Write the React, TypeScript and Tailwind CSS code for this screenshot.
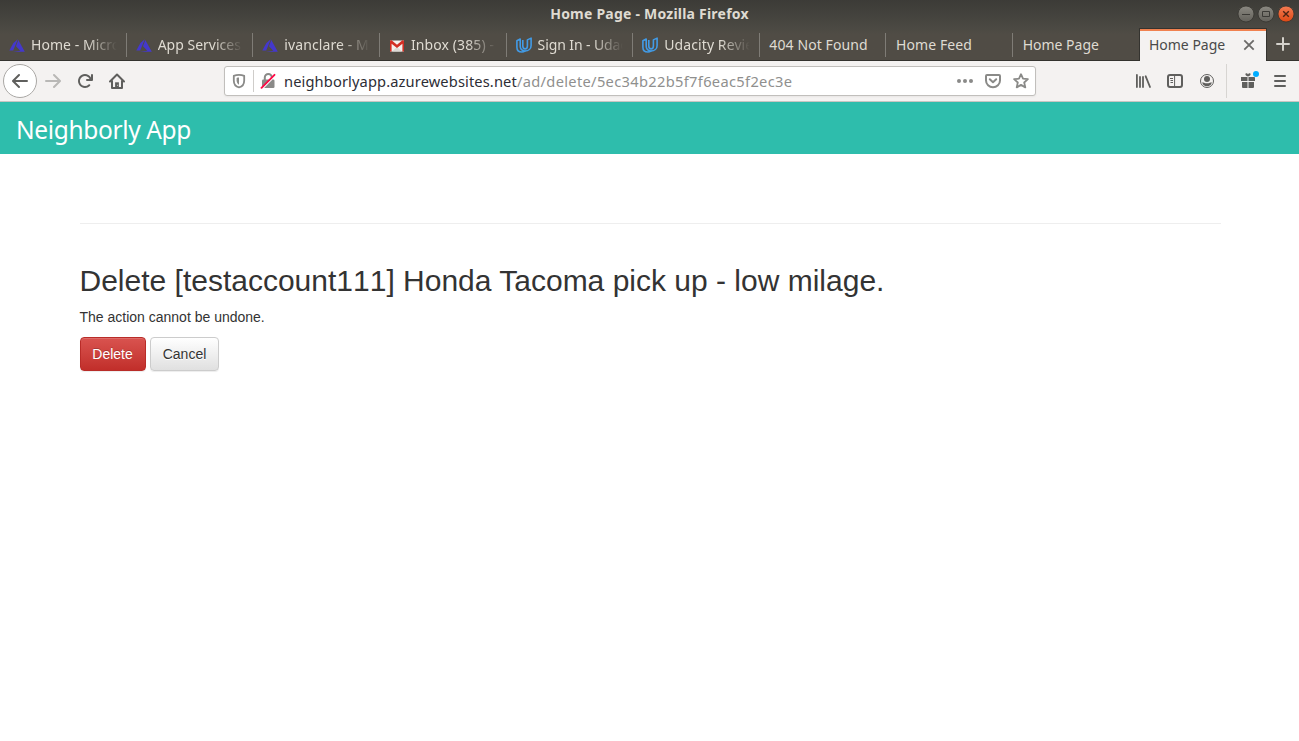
import React from "react";

const tabs: { label: string; icon?: "azure" | "gmail" | "udacity"; cls: string }[] = [
  { label: "Home - Micro", icon: "azure", cls: "tracking-[0.05px]" },
  { label: "App Services", icon: "azure", cls: "tracking-[0px]" },
  { label: "ivanclare - M", icon: "azure", cls: "tracking-[0.1px]" },
  { label: "Inbox (385) -", icon: "gmail", cls: "tracking-[0.1px]" },
  { label: "Sign In - Udac", icon: "udacity", cls: "tracking-[-0.1px]" },
  { label: "Udacity Revie", icon: "udacity", cls: "tracking-[0.1px]" },
  { label: "404 Not Found", cls: "tracking-[0.1px]" },
  { label: "Home Feed", cls: "tracking-[0.1px]" },
  { label: "Home Page", cls: "tracking-[0px]" },
];

function Favicon({ kind }: { kind: "azure" | "gmail" | "udacity" }) {
  if (kind === "azure")
    return (
      <svg className="mt-0.5 size-4 shrink-0" viewBox="0 0 16 16" fill="#4438cc">
        <path d="M8.800 1.300 4.400 4.900.3 12.400h3.900zM9.300 2.100 7 8.200l4.300 4.500-7.500 1h12z" />
      </svg>
    );
  if (kind === "gmail")
    return (
      <svg className="mt-0.5 size-4 shrink-0" viewBox="0 0 16 16">
        <path d="M1.200 2.500h13.600v11H1.200z" fill="#f4f1ee" />
        <path d="m3 13.500 5-4.500 5 4.500z" fill="#dcd9d5" />
        <path d="M1 13.500V3.800C1 2.200 2.400 2.100 3.200 2.700L8 6.800l4.800-4.100c.8-.6 2.200-.5 2.200 1.100v9.700h-1.600V5.700L8 10 2.600 5.700v7.800z" fill="#d32f24" />
      </svg>
    );
  return (
    <svg className="size-4 shrink-0" viewBox="0 0 16 16" fill="none" stroke="#429be6" strokeWidth="1.600" strokeLinejoin="round">
      <path d="M4.200 2 .9 3.700v6.500c0 3 2.200 4.800 5 4.800 1.200 0 2.200-.4 3-1-3-.3-4.700-2-4.700-5z" />
      <path d="M6.800 3v6c0 1.800 1 2.900 2.300 2.900s2.300-1.100 2.300-2.900V2.900l3.700-1.800v7.300c0 3.400-2.600 5.600-6.200 5.600" />
    </svg>
  );
}

function TitleBar() {
  return (
    <div className="relative flex h-7 items-center justify-center bg-linear-to-b from-[#3c3b37] to-[#4b4943] text-[14px] font-bold text-[#dfdbd2]">
      <span className="-mt-0.5 tracking-[0.22px]">Home Page - Mozilla Firefox</span>
      <div className="absolute right-[4px] top-[5px] flex gap-0.5">
        <svg className="size-[18px]" viewBox="0 0 18 18">
          <defs>
            <linearGradient id="grayButton" x1="0" y1="0" x2="0" y2="1">
              <stop offset="0" stopColor="#8b8982" />
              <stop offset="1" stopColor="#62605a" />
            </linearGradient>
            <linearGradient id="closeButton" x1="0" y1="0" x2="0" y2="1">
              <stop offset="0" stopColor="#f47c53" />
              <stop offset="1" stopColor="#dd4814" />
            </linearGradient>
          </defs>
          <circle cx="9" cy="9" r="8" fill="url(#grayButton)" stroke="#35342f" strokeWidth=".8" />
          <path d="M5 9.500h8" stroke="#3b3a36" />
        </svg>
        <svg className="size-[18px]" viewBox="0 0 18 18">
          <circle cx="9" cy="9" r="8" fill="url(#grayButton)" stroke="#35342f" strokeWidth=".8" />
          <path d="M5.500 6.500h7v5h-7z" fill="none" stroke="#3b3a36" />
        </svg>
        <svg className="size-[18px]" viewBox="0 0 18 18">
          <circle cx="9" cy="9" r="8" fill="url(#closeButton)" stroke="#35342f" strokeWidth=".8" />
          <path d="m6.200 6.200 5.600 5.600m0-5.600-5.600 5.600" stroke="#4b2414" strokeWidth="1.400" />
        </svg>
      </div>
    </div>
  );
}

function TabStrip() {
  return (
    <div className="flex h-[33px] border-b border-[#34332f] bg-linear-to-b from-[#4b4943] to-[#504c45] to-20% text-[14px] text-[#dfdbd2]">
      {tabs.map((t, i) => (
        <div key={i} className="flex h-8 w-[126.650px] shrink-0 items-center gap-1.5 pl-[9px] pt-px">
          {t.icon && <Favicon kind={t.icon} />}
          <span
            className={`${t.cls} min-w-0 flex-1 overflow-hidden whitespace-nowrap leading-5 ${
              t.icon ? "mask-r-from-65% mask-r-to-100%" : "pl-[0.5px]"
            }`}
          >
            {t.label}
          </span>
          <span className={`mb-[3px] h-6 w-px self-end bg-[#7f7c76] ${i === 8 ? "invisible" : ""} ${t.icon ? "ml-[3px]" : ""}`} />
        </div>
      ))}
      <div className="-ml-[0.850px] flex h-[33px] w-[128px] shrink-0 items-center border-x border-t border-[#34332f] bg-[#f4f2f1] pl-[9px] text-[#4a4a4a] shadow-[inset_0_2px_0_#f0814f]">
        <span className="-mt-px flex-1 whitespace-nowrap">Home Page</span>
        <svg className="mr-[9px] size-4" viewBox="0 0 16 16" stroke="#6b6a68" strokeWidth="1.800">
          <path d="m3.300 3.300 9.400 9.400m0-9.400-9.400 9.400" />
        </svg>
      </div>
      <div className="flex flex-1 items-center justify-center">
        <svg className="size-4" viewBox="0 0 16 16" stroke="#d5d2cc" strokeWidth="2" strokeLinecap="round">
          <path d="M8 2v12M2 8h12" />
        </svg>
      </div>
    </div>
  );
}

const ic = "size-4 shrink-0";

function NavBar() {
  return (
    <div className="flex h-[41px] items-center border-b border-[#c8c5c2] bg-[#f4f2f1] text-[#5f5f5d]">
      <div className="ml-[3px] flex size-[34px] items-center justify-center rounded-full border border-[#aaa8a5] bg-white">
        <svg className={ic} viewBox="0 0 16 16" fill="currentColor">
          <path d="M15 7H3.414l4.293-4.293a1 1 0 0 0-1.414-1.414l-6 6a1 1 0 0 0 0 1.414l6 6a1 1 0 0 0 1.414-1.414L3.414 9H15a1 1 0 0 0 0-2z" />
        </svg>
      </div>
      <svg className={`${ic} ml-2 rotate-180 text-[#b9b8b6]`} viewBox="0 0 16 16" fill="currentColor">
        <path d="M15 7H3.414l4.293-4.293a1 1 0 0 0-1.414-1.414l-6 6a1 1 0 0 0 0 1.414l6 6a1 1 0 0 0 1.414-1.414L3.414 9H15a1 1 0 0 0 0-2z" />
      </svg>
      <svg className={`${ic} ml-4`} viewBox="0 0 16 16" fill="currentColor">
        <path d="M15 1a1 1 0 0 0-1 1v2.418A6.995 6.995 0 1 0 8 15a6.954 6.954 0 0 0 4.950-2.050 1 1 0 0 0-1.414-1.414A5.019 5.019 0 1 1 12.549 6H10a1 1 0 0 0 0 2h5a1 1 0 0 0 1-1V2a1 1 0 0 0-1-1z" />
      </svg>
      <svg className={`${ic} ml-4`} viewBox="0 0 16 16" fill="none" stroke="currentColor" strokeWidth="2" strokeLinecap="round" strokeLinejoin="round">
        <path d="m1 8.500 7-7 7 7M3 7.500V15h10V7.500" />
        <path d="M8 14.500V9.300" strokeWidth="3.800" strokeLinecap="butt" />
        <path d="M8.700 12.300h.01" stroke="#f4f2f1" strokeWidth="1" />
      </svg>
      <div className="ml-[99px] flex h-[30px] w-[812px] items-center rounded-[3px] border border-[#c1bfbc] bg-white text-[#8a8a88] shadow-xs">
        <svg className={`${ic} ml-1.5`} viewBox="0 0 16 16" fill="none" stroke="currentColor" strokeWidth="1.800" strokeLinejoin="round">
          <path d="M8 1.900c-1.900 0-3.600.3-5.200 1v4.600c0 3.500 2.100 6.200 5.200 6.900 3.100-.7 5.200-3.400 5.200-6.900V2.900c-1.600-.7-3.300-1-5.200-1z" />
          <path d="M8 4.600c-.9 0-1.700.1-2.400.3v2.600c0 1.900.9 3.400 2.400 4.200z" fill="currentColor" stroke="none" />
        </svg>
        <span className="ml-1.5 h-[22px] w-px bg-[#cfcdca]" />
        <svg className={`${ic} ml-1.5`} viewBox="0 0 16 16">
          <path d="M4.800 7V4.500a3.500 3.500 0 0 1 7 0V7" fill="none" stroke="#8a8a88" strokeWidth="2" />
          <rect x="2" y="6.500" width="12.500" height="8.500" rx="1.200" fill="#8a8a88" />
          <path d="M2.400 15.800 16 2.200" stroke="#fff" strokeWidth="1.300" />
          <path d="M1.500 14.800 14.500 1.800" stroke="#ff0a46" strokeWidth="1.900" strokeLinecap="round" />
        </svg>
        <span className="ml-2 flex-1 whitespace-nowrap text-[14.670px] tracking-[0.320px] text-[#8f8f8e]">
          <span className="tracking-[0.120px] text-[#2d2d35]">neighborlyapp.azurewebsites.net</span>/ad/delete/5ec34b22b5f7f6eac5f2ec3e
        </span>
        <svg className={`${ic} mr-3`} viewBox="0 0 16 16" fill="currentColor">
          <circle cx="2" cy="8" r="2" />
          <circle cx="8" cy="8" r="2" />
          <circle cx="14" cy="8" r="2" />
        </svg>
        <svg className={`${ic} mr-3`} viewBox="0 0 16 16" fill="none" stroke="currentColor" strokeWidth="2" strokeLinecap="round" strokeLinejoin="round">
          <path d="M2 2h12a1 1 0 0 1 1 1v4.500a7 6.700 0 0 1-14 0V3a1 1 0 0 1 1-1z" />
          <path d="m4.800 6.300 3.200 3 3.200-3" />
        </svg>
        <svg className={`${ic} mr-1.5`} viewBox="0 0 16 16" fill="none" stroke="currentColor" strokeWidth="1.800" strokeLinejoin="round">
          <path d="m8 1.200 2 4.500 4.900.5-3.700 3.300 1.100 4.900L8 11.900l-4.300 2.500 1.100-4.900L1.100 6.200 6 5.700z" />
        </svg>
      </div>
      <svg className={`${ic} ml-[99px]`} viewBox="0 0 16 16" fill="none" stroke="currentColor" strokeWidth="1.800" strokeLinecap="round">
        <path d="M1.900 2v12M5 4v10M8 4v10M10.700 3.300 15 14" />
      </svg>
      <svg className={`${ic} ml-4`} viewBox="0 0 16 16" fill="none" stroke="currentColor">
        <rect x="1" y="2" width="14" height="12" rx="2" strokeWidth="2" />
        <path d="M7.600 2v12" strokeWidth="1" />
        <path d="M3 5.500h3M3.500 7.500H6M3.500 9.500H6" />
      </svg>
      <svg className={`${ic} ml-4`} viewBox="0 0 16 16" fill="currentColor">
        <circle cx="8" cy="8" r="6.500" fill="none" stroke="currentColor" />
        <circle cx="8" cy="6" r="3" />
        <path d="M3.200 9.200C4.500 9.200 5.500 10.300 8 10.300s3.500-1.100 4.800-1.100C12.500 12 10.500 13.200 8 13.200S3.500 12 3.200 9.200z" />
      </svg>
      <span className="ml-[11px] h-[34px] w-px bg-[#d7d5d2]" />
      <div className="relative ml-[13px] size-4">
        <svg className="size-4" viewBox="0 0 16 16" fill="currentColor">
          <path d="M1 4h6.500v4H1zM8.500 4H15v4H8.500zM2 9h5.500v6H3a1 1 0 0 1-1-1zM8.500 9H14v5a1 1 0 0 1-1 1H8.500z" />
          <path d="M8 3.500C6.500 3.200 5 2.200 5.500.8 6.300 0 7.500.4 8 1.400c.5-1 1.700-1.400 2.500-.6.5 1.400-1 2.400-2.500 2.700z" />
        </svg>
        <span className="absolute -right-[3px] -top-[2px] size-1.5 rounded-full bg-[#00adff] ring-[0.5px] ring-[#f4f2f1]" />
      </div>
      <svg className={`${ic} ml-4`} viewBox="0 0 16 16" stroke="currentColor" strokeWidth="2" strokeLinecap="round">
        <path d="M3 3h10M3 8h10M3 13h10" />
      </svg>
    </div>
  );
}

export default function App() {
  return (
    <div className="flex h-[741px] w-[1299px] flex-col overflow-hidden bg-white font-['Noto_Sans','Open_Sans',sans-serif]">
      <TitleBar />
      <TabStrip />
      <NavBar />
      <header className="flex h-[52px] items-center bg-[#2ebdac] pl-4 pt-1 text-[24.500px] text-white">
        <span className="tracking-[-0.350px]">Neighborly App</span>
      </header>
      <main className="ml-[79.500px] mr-[78.500px] pt-[69px] font-['Liberation_Sans',Arial,sans-serif] text-[14px] leading-5 text-[#333]">
        <hr className="border-t border-[#eee]" />
        <h1 className="mt-10 text-[30px] leading-[33px]">
          Delete [testaccount<span className="[font-kerning:none]">111</span>] Honda Tacoma pick up - low milage.
        </h1>
        <p className="mt-2.5">The action cannot be undone.</p>
        <div className="mt-2.5 flex gap-1">
          <button className="h-[34px] w-[66px] rounded-[4px] border border-[#b92c28] bg-linear-to-b from-[#d9534f] to-[#c12e2a] text-white shadow-[inset_0_1px_0_rgba(255,255,255,0.15),0_1px_1px_rgba(0,0,0,0.075)] text-shadow-[0_-1px_0_rgba(0,0,0,0.2)]">
            Delete
          </button>
          <button className="h-[34px] w-[69px] rounded-[4px] border border-[#ccc] bg-linear-to-b from-white to-[#e0e0e0] pl-[7px] shadow-[inset_0_1px_0_rgba(255,255,255,0.15),0_1px_1px_rgba(0,0,0,0.075)] text-shadow-[0_1px_0_#fff] pr-1.5">
            Cancel
          </button>
        </div>
      </main>
    </div>
  );
}
